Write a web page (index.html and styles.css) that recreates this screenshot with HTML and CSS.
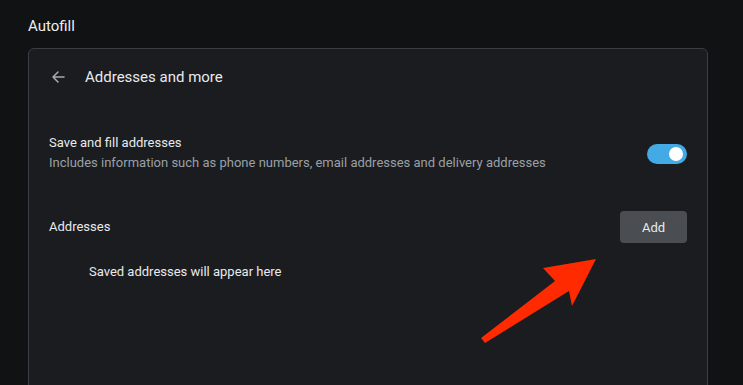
FILE: index.html
```html
<!DOCTYPE html>
<html>
<head>
<meta charset="utf-8">
<link rel="stylesheet" href="styles.css">
</head>
<body>
<div class="page">
  <h1 class="title">Autofill</h1>
  <section class="card">
    <div class="card-header">
      <svg class="back" width="16" height="16" viewBox="0 0 16 16"><path d="M14 8H3M8 3L3 8l5 5" fill="none" stroke="#a7abb0" stroke-width="1.5" stroke-linecap="round" stroke-linejoin="round"/></svg>
      <span class="header-text">Addresses and more</span>
    </div>
    <div class="row setting">
      <div class="setting-text">
        <div class="label">Save and fill addresses</div>
        <div class="sub">Includes information such as phone numbers, email addresses and delivery addresses</div>
      </div>
      <div class="toggle"><div class="knob"></div></div>
    </div>
    <div class="row addresses">
      <div class="label">Addresses</div>
      <button class="add-btn">Add</button>
    </div>
    <div class="empty">Saved addresses will appear here</div>
  </section>
</div>
<svg class="annotation" width="743" height="385" viewBox="0 0 743 385">
  <polygon points="596,259 543,268 555,281 481,338 485,343 569,291 572,306" fill="#ff2a00"/>
</svg>
</body>
</html>
```

FILE: styles.css
```css
html, body {
  margin: 0;
  padding: 0;
  background: #111213;
  height: 100%;
  overflow: hidden;
}
body {
  font-family: Roboto, "Noto Sans", "Liberation Sans", sans-serif;
  color: #e8eaed;
  position: relative;
}
.page {
  padding: 0 35px 0 28px;
}
.title {
  margin: 0;
  padding-top: 17px;
  height: 31px;
  font-size: 15px;
  font-weight: 400;
  line-height: 18px;
  color: #eceef0;
}
.card {
  background: #1a1c20;
  border: 1px solid #3a3e45;
  border-radius: 6px;
  height: 400px;
  box-sizing: border-box;
}
.card-header {
  display: flex;
  align-items: center;
  height: 56px;
  padding-left: 21px;
}
.back {
  display: block;
  margin-right: 19px;
}
.header-text {
  font-size: 15px;
  color: #e8eaed;
}
.row {
  display: flex;
  align-items: center;
  justify-content: space-between;
  padding: 0 20px 0 20px;
}
.setting {
  margin-top: 29px;
  height: 38px;
}
.label {
  font-size: 13px;
  line-height: 18px;
  color: #e8eaed;
}
.sub {
  font-size: 13px;
  line-height: 18px;
  color: #9aa0a6;
  margin-top: 2px;
}
.toggle {
  width: 40px;
  height: 20px;
  border-radius: 10px;
  background: #43aae6;
  display: flex;
  align-items: center;
  justify-content: flex-end;
  padding-right: 4px;
  box-sizing: border-box;
  margin-top: 1px;
}
.knob {
  width: 14px;
  height: 14px;
  border-radius: 50%;
  background: #ffffff;
}
.addresses {
  margin-top: 39px;
  height: 32px;
}
.add-btn {
  width: 67px;
  height: 32px;
  border: none;
  border-radius: 4px;
  background: #4a4d51;
  color: #e8eaed;
  font-family: inherit;
  font-size: 13px;
  padding: 0;
}
.empty {
  margin-top: 20px;
  padding-left: 60px;
  font-size: 13px;
  line-height: 18px;
  color: #e8eaed;
}
.annotation {
  position: absolute;
  left: 0;
  top: 0;
  pointer-events: none;
}
```
